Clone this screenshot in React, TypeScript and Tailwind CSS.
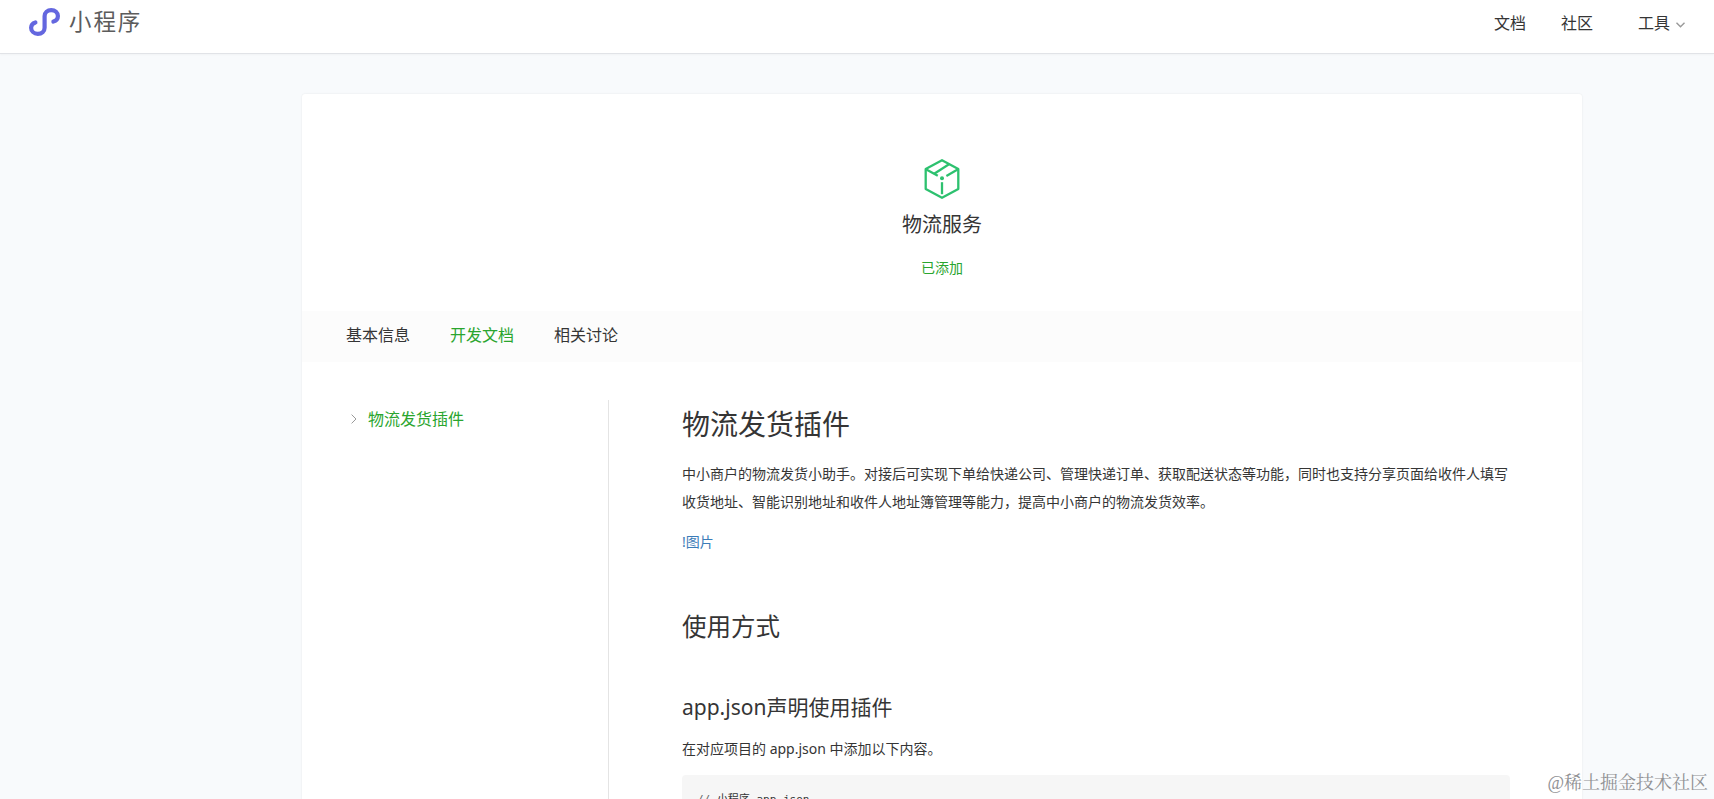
const navItem = 'text-base leading-6 text-[#353535]';

function Logo() {
  return (
    <svg className="mt-[7px] h-[30px] w-[32px]" viewBox="0 0 32 30" fill="none" stroke="#6467df" strokeWidth="4.2" strokeLinecap="round">
      <path d="M6.4 15.4C3.8 16.2 2.1 18.2 2.1 20.7C2.1 24.2 5 26.8 8.8 26.8C12.8 26.8 15.6 24.4 15.6 20.7V9.1C15.6 5.6 18.5 3.1 22.2 3.1C26.1 3.1 28.9 5.7 28.9 9.1C28.9 11.7 27.2 13.8 24.4 14.6" />
    </svg>
  );
}

function BoxIcon() {
  return (
    <svg className="h-[42px] w-[36px]" viewBox="0 0 36 42" fill="none" stroke="#2dc16f" strokeWidth="2.3" strokeLinejoin="round">
      <path d="M18 2.2L34.3 11.1V31L18 39.8L1.7 31V11.1Z" />
      <path d="M1.9 11.2L13.8 17.7" />
      <path d="M10.2 15.7L25 6.3" />
      <path d="M34 11.3L22.4 18" />
      <path d="M18 24.2V36.2" />
      <circle cx="18" cy="20.2" r="2" fill="#2dc16f" stroke="none" />
    </svg>
  );
}

export default function App() {
  return (
    <div className="relative flex h-[799px] flex-col overflow-hidden bg-[#f8fafc] font-['Noto_Sans','Noto_Sans_CJK_SC',sans-serif] text-[#353535]">
      <header className="flex h-[54px] shrink-0 items-start justify-between border-b border-[#e1e3e7] bg-white pr-[29px] pl-[29px] shadow-[0_1px_2px_rgba(0,0,0,0.03)]">
        <div className="flex items-start">
          <Logo />
          <span className="mt-[7px] ml-[8px] text-[22.5px] leading-[30px] tracking-[1.9px] text-[#5c5c5c]">小程序</span>
        </div>
        <nav className="mt-[11px] flex items-center">
          <a className={navItem}>文档</a>
          <a className={`${navItem} ml-[35px]`}>社区</a>
          <a className={`${navItem} ml-[45px]`}>工具</a>
          <svg className="mt-[3px] ml-[6px] h-[6px] w-[9px]" viewBox="0 0 9 6" fill="none" stroke="#999" strokeWidth="1.4">
            <path d="M.5.7L4.5 4.7L8.5.7" />
          </svg>
        </nav>
      </header>

      <main className="mt-[40px] ml-[302px] flex h-[720px] w-[1280px] shrink-0 flex-col rounded-t-[3px] bg-white shadow-[0_0_2px_rgba(0,0,0,0.09)]">
        <section className="flex h-[217px] shrink-0 flex-col items-center pt-[64px]">
          <BoxIcon />
          <h1 className="mt-[10px] text-xl leading-[30px]">物流服务</h1>
          <p className="mt-[18px] text-sm leading-5 text-[#2aa52e]">已添加</p>
        </section>

        <nav className="flex h-[51px] shrink-0 items-start gap-[40px] bg-[#fcfcfc] px-[44px] pt-[12px] text-base leading-6">
          <a>基本信息</a>
          <a className="text-[#2aa52e]">开发文档</a>
          <a>相关讨论</a>
        </nav>

        <div className="flex flex-1 pt-[38px]">
          <aside className="flex w-[307px] shrink-0 items-start border-r border-[#e4e4e4] pt-[7px] pl-[49px]">
            <svg className="mt-[7px] h-[10px] w-[6px]" viewBox="0 0 6 10" fill="none" stroke="#999" strokeWidth="1">
              <path d="M.6.6L5 5L.6 9.4" />
            </svg>
            <a className="ml-[11px] text-base leading-6 text-[#2aa52e]">物流发货插件</a>
          </aside>

          <article className="ml-[73px] w-[828px]">
            <h2 className="mt-[4px] text-[28px] leading-[40px]">物流发货插件</h2>
            <p className="mt-[16px] w-[827px] text-sm leading-7">
              中小商户的物流发货小助手。对接后可实现下单给快递公司、管理快递订单、获取配送状态等功能，同时也支持分享页面给收件人填写
              <br />
              收货地址、智能识别地址和收件人地址簿管理等能力，提高中小商户的物流发货效率。
            </p>
            <p className="mt-[12px] text-sm leading-7 text-[#3b7cb8]">!图片</p>
            <h3 className="mt-[53px] text-[24.5px] leading-[36px]">使用方式</h3>
            <h4 className="mt-[46px] text-[21px] leading-[32px]">app.json声明使用插件</h4>
            <p className="mt-[12px] text-sm leading-7">在对应项目的 app.json 中添加以下内容。</p>
            <pre className="mt-[12px] h-[60px] rounded-[4px] bg-[#f6f6f6] pt-[16px] pl-[15px] font-['DejaVu_Sans_Mono','Noto_Sans_CJK_SC',monospace] text-[11px] leading-[18px]">
              <span className="text-[#666]">{'// '}</span>小程序 app.json
            </pre>
          </article>
        </div>
      </main>

      <div className="absolute right-[6px] bottom-[3px] font-['Liberation_Serif','Noto_Serif_CJK_SC','Noto_Sans_CJK_SC',serif] text-[18px] leading-[26px] text-[#909194]">
        @稀土掘金技术社区
      </div>
    </div>
  );
}
